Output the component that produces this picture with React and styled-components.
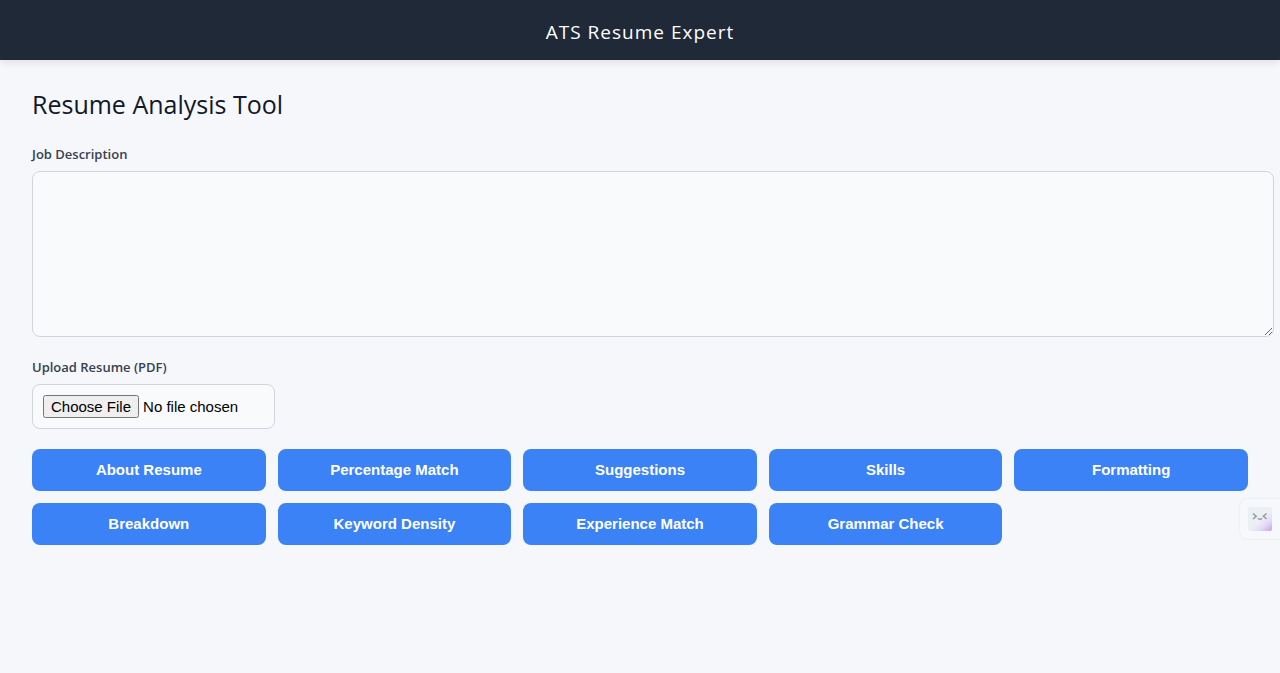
import React from "react";
import styled, { createGlobalStyle } from "styled-components";

const Global = createGlobalStyle`
  body {
    margin: 0;
    min-height: 100vh;
    background: #f5f7fb;
    color: #111827;
    font-family: "Open Sans", "Noto Sans", sans-serif;
    overflow-x: hidden;
  }
`;

const Header = styled.header`
  padding: 18px 32px 14px;
  background: #1f2937;
  color: #fff;
  font-size: 19px;
  line-height: 28px;
  font-weight: 500;
  letter-spacing: 1px;
  text-align: center;
  box-shadow: 0 2px 8px rgba(0, 0, 0, 0.1);
`;

const Main = styled.main`
  padding: 24px 32px;
`;

const Title = styled.h1`
  margin: 0 0 20px;
  font-size: 25px;
  line-height: 40px;
  font-weight: 500;
`;

const Field = styled.div`
  margin-bottom: 20px;
`;

const Label = styled.label`
  display: block;
  margin-bottom: 7px;
  color: #374151;
  font-size: 13px;
  line-height: 20px;
  font-weight: 600;
`;

const TextArea = styled.textarea`
  display: block;
  width: 100%;
  height: 144px;
  padding: 10px 12px;
  border: 1px solid #d1d5db;
  border-radius: 8px;
  background: #f9fafb;
  font: 15px "Liberation Sans", sans-serif;
  resize: vertical;
`;

const FileInput = styled.input`
  display: block;
  box-sizing: border-box;
  width: 243px;
  max-width: 100%;
  padding: 10px;
  border: 1px solid #d1d5db;
  border-radius: 8px;
  background: #f9fafb;
  color: #000;
  font: 15px "Liberation Sans", sans-serif;
`;

const Actions = styled.div`
  display: grid;
  grid-template-columns: repeat(auto-fit, minmax(200px, 1fr));
  gap: 12px;
`;

const ActionButton = styled.button`
  height: 42px;
  padding: 0 12px 2px;
  border: 0;
  border-radius: 8px;
  background: #3b82f6;
  color: #fff;
  font: 600 15px "Liberation Sans", sans-serif;
  cursor: pointer;
`;

const Assistant = styled.button`
  position: fixed;
  right: 0;
  top: 499px;
  width: 40px;
  height: 40px;
  padding: 8px;
  border: 0;
  border-radius: 8px 0 0 8px;
  background: #f7f8fc;
  box-shadow: 0 0 2px rgba(0, 0, 0, 0.1);

  svg {
    display: block;
  }
`;

const actions = [
  "About Resume", "Percentage Match", "Suggestions", "Skills", "Formatting",
  "Breakdown", "Keyword Density", "Experience Match", "Grammar Check",
];

export default function App() {
  return (
    <>
      <Global />
      <Header>ATS Resume Expert</Header>
      <Main>
        <Title>Resume Analysis Tool</Title>
        <Field>
          <Label htmlFor="job">Job Description</Label>
          <TextArea id="job" />
        </Field>
        <Field>
          <Label htmlFor="resume">Upload Resume (PDF)</Label>
          <FileInput id="resume" type="file" accept="application/pdf" />
        </Field>
        <Actions>
          {actions.map((name) => (
            <ActionButton key={name} type="button">{name}</ActionButton>
          ))}
        </Actions>
      </Main>
      <Assistant type="button" aria-label="Assistant">
        <svg width="24" height="24" viewBox="0 0 24 24" fill="none">
          <defs>
            <linearGradient id="face" x1="3" y1="1" x2="23" y2="24" gradientUnits="userSpaceOnUse">
              <stop offset="0.5" stopColor="#eceff4" />
              <stop offset="0.75" stopColor="#e3d8f5" />
              <stop offset="1" stopColor="#c8a4ee" />
            </linearGradient>
          </defs>
          <rect width="24" height="24" rx="2" fill="url(#face)" />
          <path
            d="M5 6.5L8.2 9.3L5 12M18.6 6.5L15.4 9.3L18.6 12M10 11.3Q12 13.5 14 11.3"
            stroke="#9a9da3"
            strokeWidth="1.6"
          />
        </svg>
      </Assistant>
    </>
  );
}
